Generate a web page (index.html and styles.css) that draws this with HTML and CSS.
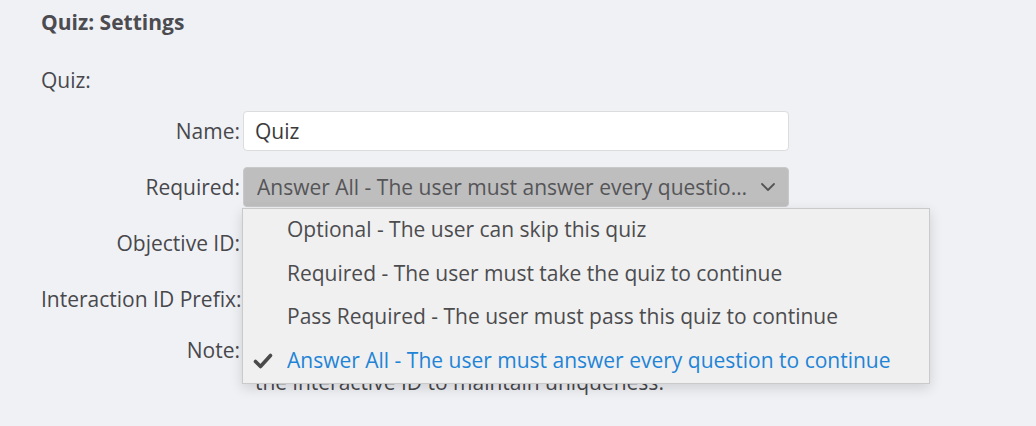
FILE: index.html
```html
<!DOCTYPE html>
<html lang="en">
<head>
<meta charset="utf-8">
<title>Quiz: Settings</title>
<link rel="stylesheet" href="styles.css">
</head>
<body>
<div class="panel">
  <h1 class="title">Quiz: Settings</h1>
  <div class="section">Quiz:</div>
  <div class="form">
    <label class="label">Name:</label>
    <div class="field"><div class="input">Quiz</div></div>

    <label class="label">Required:</label>
    <div class="field select-wrap">
      <div class="select">
        <span class="select-text">Answer All - The user must answer every question to continue</span>
        <svg class="chevron" width="16" height="10" viewBox="0 0 16 10"><path d="M2 2 L8 8 L14 2" fill="none" stroke="#555" stroke-width="1.8" stroke-linecap="round" stroke-linejoin="round"/></svg>
      </div>
      <ul class="menu">
        <li class="item">Optional - The user can skip this quiz</li>
        <li class="item">Required - The user must take the quiz to continue</li>
        <li class="item">Pass Required - The user must pass this quiz to continue</li>
        <li class="item selected"><svg class="check" width="20" height="16" viewBox="0 0 20 16"><path d="M2.5 8.5 L7.5 13.5 L17.5 2.5" fill="none" stroke="#4a4a4a" stroke-width="3.6" stroke-linecap="round" stroke-linejoin="round"/></svg>Answer All - The user must answer every question to continue</li>
      </ul>
    </div>

    <label class="label">Objective ID:</label>
    <div class="field"><div class="input"></div></div>

    <label class="label">Interaction ID Prefix:</label>
    <div class="field"><div class="input"></div></div>

    <label class="label note-label">Note:</label>
    <div class="field"><p class="note">The Quiz Name is prefixed to<br>the interactive ID to maintain uniqueness.</p></div>
  </div>
</div>
</body>
</html>
```
FILE: styles.css
```css
* { box-sizing: border-box; }
html, body { margin: 0; padding: 0; }
body {
  background: #f0f1f5;
  font-family: "Open Sans", "Noto Sans", sans-serif;
  color: #48484c;
  width: 1036px;
  height: 426px;
  overflow: hidden;
}
.panel {
  padding: 7px 0 0 41px;
}
.title {
  margin: 0;
  font-size: 21px;
  font-weight: 700;
  line-height: 30px;
  color: #4b4b50;
}
.section {
  margin-top: 28px;
  font-size: 21px;
  line-height: 30px;
}
.form {
  display: grid;
  grid-template-columns: 199px 546px;
  column-gap: 3px;
  row-gap: 16px;
  margin-top: 16px;
  font-size: 21px;
}
.label {
  text-align: right;
  line-height: 40px;
  height: 40px;
  white-space: nowrap;
}
.note-label { line-height: 30px; }
.field { position: relative; }
.input {
  height: 40px;
  background: #fff;
  border: 1px solid #dcdcdc;
  border-radius: 4px;
  padding: 0 11px;
  line-height: 38px;
  color: #3a3a3c;
}
.select {
  height: 40px;
  background: #bebebe;
  border: 1px solid #c9c9c9;
  border-radius: 4px;
  padding: 0 40px 0 13px;
  line-height: 38px;
  color: #555558;
  position: relative;
}
.select-text {
  display: block;
  white-space: nowrap;
  overflow: hidden;
  text-overflow: ellipsis;
}
.chevron {
  position: absolute;
  right: 12px;
  top: 14px;
}
.menu {
  position: absolute;
  top: 41px;
  left: -1px;
  width: 688px;
  margin: 0;
  padding: 0;
  list-style: none;
  background: #f0f0f0;
  border: 1px solid #cacaca;
  box-shadow: 0 4px 12px rgba(0,0,0,0.14);
  z-index: 5;
}
.item {
  position: relative;
  height: 43.5px;
  line-height: 41px;
  padding-left: 44px;
  color: #4c4c4f;
  white-space: nowrap;
}
.item.selected { color: #1f84d6; }
.check {
  position: absolute;
  left: 10px;
  top: 13px;
}
.note {
  margin: 0;
  padding: 2px 0 0 12px;
  line-height: 30px;
}
```
